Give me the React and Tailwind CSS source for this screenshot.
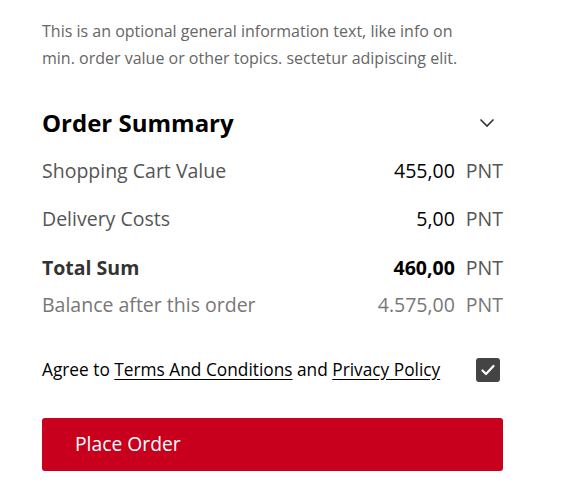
import React from "react";

export default function App() {
  return (
    <div className="w-[568px] h-[503px] bg-white" style={{ fontFamily: '"Open Sans", "Noto Sans", sans-serif' }}>
      <div className="pl-[42px] pr-[65px] pt-[18px]">
        <p className="w-[440px] text-[16px] leading-[27px] text-[#666666]">
          This is an optional general information text, like info on min. order value or other topics. sectetur adipiscing elit.
        </p>
        <div className="mt-[36px] flex items-center justify-between">
          <h2 className="text-[24px] leading-[30px] font-bold text-black">Order Summary</h2>
          <svg width="16" height="10" viewBox="0 0 16 10" className="mr-[8px]">
            <path d="M1.5 1.5 L8 8 L14.5 1.5" fill="none" stroke="#333" strokeWidth="1.6" />
          </svg>
        </div>
        <div className="mt-[20px] flex justify-between text-[19.5px] leading-[26px]">
          <span className="text-[#555555]">Shopping Cart Value</span>
          <span><span className="text-black">455,00</span><span className="text-[#555555] ml-[11px]">PNT</span></span>
        </div>
        <div className="mt-[22px] flex justify-between text-[19.5px] leading-[26px]">
          <span className="text-[#555555]">Delivery Costs</span>
          <span><span className="text-black">5,00</span><span className="text-[#555555] ml-[11px]">PNT</span></span>
        </div>
        <div className="mt-[23px] flex justify-between text-[19.5px] leading-[26px]">
          <span className="text-[#333333] font-bold">Total Sum</span>
          <span><span className="text-black font-bold">460,00</span><span className="text-[#555555] ml-[11px]">PNT</span></span>
        </div>
        <div className="mt-[11px] flex justify-between text-[19.5px] leading-[26px] text-[#777777]">
          <span>Balance after this order</span>
          <span><span>4.575,00</span><span className="ml-[11px]">PNT</span></span>
        </div>
        <div className="mt-[39px] flex items-center justify-between">
          <span className="text-[17.3px] leading-[26px] text-black">
            Agree to <span className="underline underline-offset-[3px]">Terms And Conditions</span> and <span className="underline underline-offset-[3px]">Privacy Policy</span>
          </span>
          <div className="w-[24px] h-[24px] rounded-[3px] bg-[#444444] flex items-center justify-center mr-[3px]">
            <svg width="14" height="12" viewBox="0 0 14 12">
              <path d="M1.5 6.5 L5 10 L12.5 2" fill="none" stroke="white" strokeWidth="2.2" strokeLinecap="round" strokeLinejoin="round" />
            </svg>
          </div>
        </div>
        <button className="mt-[35px] w-full h-[53px] rounded-[3px] bg-[#c8001e] text-left pl-[33px] text-white text-[19.3px]">
          Place Order
        </button>
      </div>
    </div>
  );
}
